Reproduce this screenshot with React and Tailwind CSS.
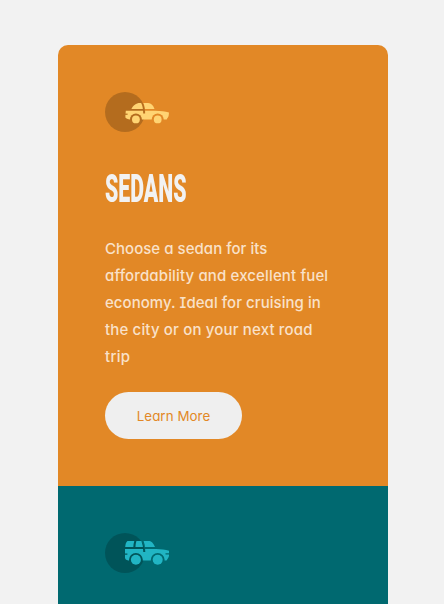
import React from 'react';

function SedanIcon() {
  return (
    <svg width="64" height="40" viewBox="0 0 64 40" className="block">
      <mask id="sedan-gaps">
        <rect width="64" height="40" fill="#fff" />
        <circle cx="30.9" cy="27.4" r="6" fill="#000" />
        <circle cx="52.7" cy="27.4" r="6" fill="#000" />
        <path d="M37 10.500c1.600 2.800 2.200 5.500 2.200 11" fill="none" stroke="#000" strokeWidth="2" />
        <path d="M19 22.200h3.600" stroke="#000" strokeWidth="1.200" />
      </mask>
      <circle cx="20" cy="20" r="20" fill="#000" fillOpacity=".2" />
      <g fill="#FFD473">
        <g mask="url(#sedan-gaps)">
          <path d="M26.400 17c1.700-3.700 4.600-6.100 8.500-6.100h8.300c3 0 5.100 2.300 6.300 6.100z" />
          <path d="M20.800 18.800h29.500c5.200.1 9.900.7 13.700 1.800l-.3 3c-.2 1.500-1.200 2.300-2 4H24.400c-2.200-.5-4-1.300-4-2.300v-2z" />
        </g>
        <circle cx="30.900" cy="27.400" r="3.900" />
        <circle cx="52.700" cy="27.400" r="3.900" />
      </g>
    </svg>
  );
}

function SuvIcon() {
  return (
    <svg width="64" height="40" viewBox="0 0 64 40" className="block">
      <mask id="suv-gaps">
        <rect width="64" height="40" fill="#fff" />
        <circle cx="30.900" cy="26.800" r="6.900" fill="#000" />
        <circle cx="52.700" cy="26.800" r="6.900" fill="#000" />
        <path d="M37.200 7c1.500 3.500 2.100 6 2.100 12" fill="none" stroke="#000" strokeWidth="2.100" />
        <path d="M30.600 7q-1.300 4-1.400 9" fill="none" stroke="#000" strokeWidth="2.100" />
        <path d="M19 21.200h3.400M60.500 20.900h4" stroke="#000" strokeWidth="1.200" />
      </mask>
      <circle cx="20" cy="20" r="20" fill="#000" fillOpacity=".2" />
      <g fill="#21B5C4">
        <g mask="url(#suv-gaps)">
          <path d="M20.200 13.900c.3-3 .8-4.700 2.300-5.900h21c2.600 0 4.600 1.600 6.500 5.900z" />
          <path d="M20 15.900h31c5 .1 9.300.7 13 1.900v4.800c-.1 1.700-1 3-2.500 4.800H23.300c-2.200-.3-3.300-1.200-3.300-2.800z" />
        </g>
        <circle cx="30.900" cy="26.800" r="5" />
        <circle cx="52.700" cy="26.800" r="5" />
      </g>
    </svg>
  );
}

const lexend =
  "font-['Inter',sans-serif] [font-feature-settings:'cv08','cv11']";

export default function App() {
  return (
    <div className="h-[604px] overflow-hidden bg-[#f2f2f2] pt-[45px] pl-[58px]">
      <main className="w-[330px] overflow-hidden rounded-t-[10px]">
        <section className="h-[441px] bg-[#e28826] px-[47px] pt-[47px]">
          <SedanIcon />
          <h2 className="mt-[33px] h-[48px] origin-left scale-x-[0.56] font-['Roboto',sans-serif] text-[38px] leading-[48px] font-black whitespace-nowrap text-[#f2f2f2] uppercase">
            Sedans
          </h2>
          <p className={`mt-[22px] text-[15px] leading-[27px] font-medium whitespace-nowrap text-[#f9e1c9] ${lexend}`}>
            <span className="block tracking-[0.03px]">Choose a sedan for its</span>
            <span className="block tracking-[0.14px]">affordability and excellent fuel</span>
            <span className="block tracking-[0.05px]">economy. Ideal for cruising in</span>
            <span className="block tracking-[0.16px]">the city or on your next road</span>
            <span className="block tracking-[0.3px]">trip</span>
          </p>
          <button className={`mt-[22px] flex h-[47px] w-[137px] items-center justify-center rounded-full bg-[#efefef] pt-[2px] text-[13.333px] tracking-[0.07px] whitespace-nowrap text-[#e28826] ${lexend}`}>
            Learn More
          </button>
        </section>
        <section className="h-[441px] bg-[#006970] px-[47px] pt-[47px]">
          <SuvIcon />
        </section>
      </main>
    </div>
  );
}
